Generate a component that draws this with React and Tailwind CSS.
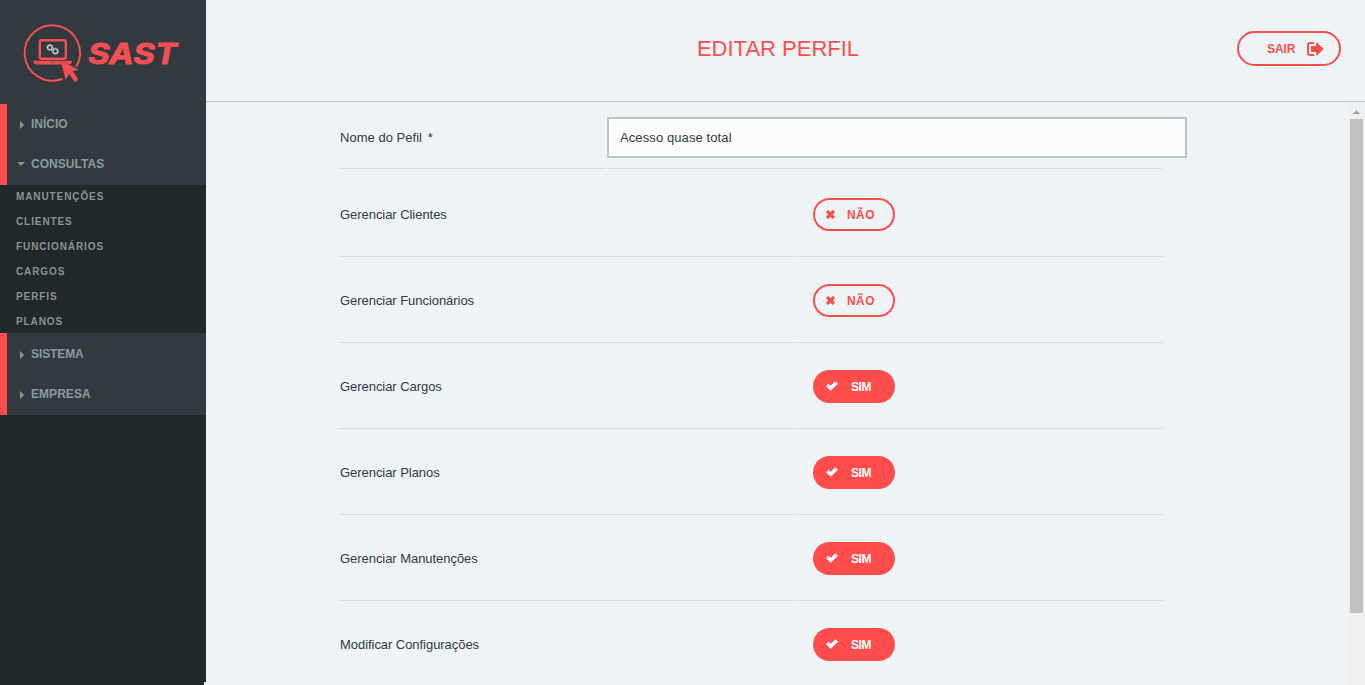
import React from "react";

const SUBMENU = ["MANUTENÇÕES", "CLIENTES", "FUNCIONÁRIOS", "CARGOS", "PERFIS", "PLANOS"];

const PERMISSIONS = [
  { label: "Gerenciar Clientes", on: false },
  { label: "Gerenciar Funcionários", on: false },
  { label: "Gerenciar Cargos", on: true },
  { label: "Gerenciar Planos", on: true },
  { label: "Gerenciar Manutenções", on: true },
  { label: "Modificar Configurações", on: true },
];

function Logo() {
  return (
    <svg width="206" height="104" viewBox="0 0 206 104" className="block shrink-0" fill="none">
      <path d="M62.5 78.7A27.7 27.7 0 1 1 76.3 66.8" stroke="#f44f54" strokeWidth="2" />
      <rect x="39.8" y="40.2" width="26" height="18.6" rx="2" stroke="#f44f54" strokeWidth="2.4" />
      <path d="M33.5 60.8h38.3v1.4q-.5 2.2-3 2.2H37q-3 0-3.5-2.2z" fill="#f44f54" />
      <path d="M50.5 62.5h4.5" stroke="#8d454c" strokeWidth="1" />
      <g stroke="#c3c8cb">
        <circle cx="49.9" cy="47.6" r="2.3" strokeWidth="1.4" />
        <circle cx="49.9" cy="47.6" r="3.2" strokeWidth=".9" strokeDasharray="1.2 1.2" />
        <circle cx="55.3" cy="51.2" r="2.3" strokeWidth="1.4" />
        <circle cx="55.3" cy="51.2" r="3.2" strokeWidth=".9" strokeDasharray="1.2 1.2" />
      </g>
      <path
        d="M60.2 59.8 78.9 69.7 73 71.4 77.7 78Q78.8 80 77.1 81.3 75.1 82.7 73.7 80.8L69.2 74.2 65.6 80Z"
        fill="#f44f54"
        stroke="#323a40"
        strokeWidth=".4"
      />
      <text
        x="88"
        y="64"
        textLength="89"
        lengthAdjust="spacingAndGlyphs"
        fill="#f44f54"
        stroke="#f44f54"
        strokeWidth=".8"
        strokeLinejoin="round"
        className="font-['Inter',sans-serif] text-[28px] font-bold italic"
      >
        SAST
      </text>
    </svg>
  );
}

function MenuItem({ label, open, className }) {
  return (
    <div className="flex h-10 items-center text-[12px] font-bold text-[#8a9a9c]">
      <span className="flex w-6 shrink-0 items-center justify-start pl-[11px]">
        {open ? (
          <svg width="8" height="4" viewBox="0 0 8 4" className="-ml-px block shrink-0 fill-[#918e94]">
            <path d="M0 0h8L4 4z" />
          </svg>
        ) : (
          <svg width="8" height="8" viewBox="0 0 8 8" className="mt-px block shrink-0 fill-[#918e94]">
            <path d="M2 0l4.2 4L2 8z" />
          </svg>
        )}
      </span>
      <span className={className}>{label}</span>
    </div>
  );
}

function Toggle({ on }) {
  return on ? (
    <button className="flex h-[33px] w-[82px] items-center rounded-full bg-[#ff4d4d] pl-[13px] text-[12px] font-bold text-white">
      <svg width="12" height="10" viewBox="0 0 12 10" className="-mt-px block">
        <path d="M.3 5.2 2.5 3 4.7 5.1 9.4.5 11.7 2.7 4.8 9.5z" fill="#fff" stroke="#fff" strokeWidth=".5" strokeLinejoin="round" />
      </svg>
      <span className="ml-[13px] tracking-[-0.4px]">SIM</span>
    </button>
  ) : (
    <button className="flex h-[33px] w-[82px] items-center rounded-full border-2 border-[#ff4d4d] pl-[11px] text-[12px] font-bold text-[#ff4d4d]">
      <svg width="9" height="9" viewBox="0 0 9 9" className="-mt-px block">
        <path d="M2.2.3 4.5 2.6 6.8.3 8.7 2.2 6.4 4.5 8.7 6.8 6.8 8.7 4.5 6.4 2.2 8.7.3 6.8 2.6 4.5.3 2.2z" fill="#ff4d4d" stroke="#ff4d4d" strokeWidth=".8" strokeLinejoin="round" />
      </svg>
      <span className="ml-3 tracking-[0.4px]">NÃO</span>
    </button>
  );
}

export default function App() {
  return (
    <div className="flex h-[685px] w-[1365px] overflow-hidden bg-[#eef3f6] font-['Liberation_Sans',Arial,sans-serif]">
      <aside className="flex h-[682px] w-[206px] shrink-0 flex-col bg-[#21282b] shadow-[-2px_3px_0_#21282b]">
        <div className="h-[104px] bg-[#323a40]">
          <Logo />
        </div>
        <nav>
          <div className="h-[81px] border-l-[7px] border-[#ff4d4d] bg-[#323a40]">
            <MenuItem label="INÍCIO" className="tracking-[0px]" />
            <MenuItem label="CONSULTAS" open className="tracking-[0.05px]" />
          </div>
          <ul className="h-[148px] pl-4 text-[10px] font-bold tracking-[0.9px] text-[#8e9193]">
            {SUBMENU.map((item) => (
              <li key={item} className="h-[25px] leading-[23px]">
                {item}
              </li>
            ))}
          </ul>
          <div className="h-[82px] border-l-[7px] border-[#ff4d4d] bg-[#323a40] pt-px">
            <MenuItem label="SISTEMA" className="tracking-[-0.1px]" />
            <MenuItem label="EMPRESA" className="tracking-[0.05px]" />
          </div>
        </nav>
      </aside>

      <div className="flex min-w-0 flex-1 flex-col">
        <header className="flex h-[102px] shrink-0 border-b border-[#bcc5cc] pr-6">
          <h1 className="flex-1 pl-[113px] pt-[31px] text-center text-[22px] leading-[35px] text-[#ff4d4d]">EDITAR PERFIL</h1>
          <button className="mt-[31px] flex h-[35px] w-[104px] items-center rounded-full border-2 border-[#ff4d4d] pl-7 text-[12px] font-bold text-[#ff4d4d]">
            <span className="w-[28px] tracking-[-0.1px]">SAIR</span>
            <svg width="17" height="14" viewBox="0 0 17 14" className="ml-3 block fill-[#ff4d4d]">
              <path d="M7 0v2H3.2Q2 2 2 3.2v7.6Q2 12 3.2 12H7v2H3Q0 14 0 11V3Q0 0 3 0z" />
              <path d="M9.3.9Q9.3.1 10 .6L16.3 6.4Q16.9 7 16.3 7.6L10 13.4Q9.3 13.9 9.3 13.1V10H4.7Q4 10 4 9.3V4.7Q4 4 4.7 4H9.3z" />
            </svg>
          </button>
        </header>

        <div className="flex min-h-0 flex-1">
          <main className="min-w-0 flex-1 overflow-hidden pl-[134px] text-[13px] text-[#333a40]">
            <div className="flex h-[67px] gap-[2px]">
              <label htmlFor="perfil" className="w-[265px] border-b border-[#d9dcde] pt-[26px] leading-5 tracking-[0.03px]">
                Nome do Pefil <span className="ml-[2px]">*</span>
              </label>
              <div className="w-[555px] border-b border-[#d9dcde] pt-[15px]">
                <input
                  id="perfil"
                  defaultValue="Acesso quase total"
                  className="h-[41px] w-[580px] border-2 border-[#bcc5cc] bg-[#fbfbfb] px-[11px] text-[13px] tracking-[0.1px] text-[#333a40] outline-none"
                />
              </div>
            </div>
            {PERMISSIONS.map((p, i) => (
              <div key={p.label} className={i === 0 ? "flex h-[88px] gap-[2px] pt-[2px]" : "flex h-[86px] gap-[2px]"}>
                <div className="w-[456px] border-b border-[#d9dcde] pt-[34px] leading-5 tracking-[-0.05px]">{p.label}</div>
                <div className="w-[365px] border-b border-[#d9dcde] pl-[15px] pt-[27px]">
                  <Toggle on={p.on} />
                </div>
              </div>
            ))}
          </main>
          <div className="flex w-[17px] flex-col items-center bg-[#f0f0f0]">
            <div className="flex h-[17px] items-center">
              <svg width="7" height="4" viewBox="0 0 7 4" className="mt-[2px] block fill-[#a0a0a0]">
                <path d="M3.5 0 7 4H0z" />
              </svg>
            </div>
            <div className="h-[494px] w-[13px] bg-[#c1c1c1]" />
          </div>
        </div>
      </div>
    </div>
  );
}
